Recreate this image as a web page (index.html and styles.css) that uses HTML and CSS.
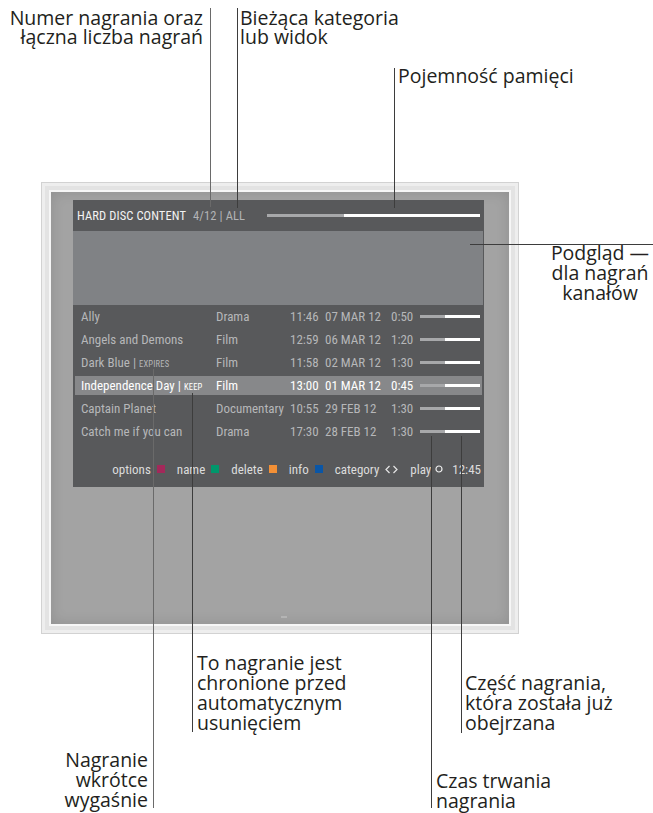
FILE: index.html
```html
<!DOCTYPE html>
<html lang="pl">
<head>
  <meta charset="UTF-8">
  <title>Hard disc content</title>
  <link rel="stylesheet" href="styles.css">
</head>
<body>
  <div class="figure">
    <div class="tv">
      <div class="screen">
        <div class="menu">
          <div class="menu-head">
            <span class="menu-title">HARD DISC CONTENT</span>
            <span class="menu-count">4/12 | ALL</span>
            <div class="bar capacity"><div class="bar-used" style="width: 36%"></div></div>
          </div>
          <div class="preview"></div>
          <div class="list">
            <div class="row">
              <span>Ally</span><span>Drama</span><span>11:46</span><span>07 MAR 12</span><span>0:50</span>
              <div class="bar"><div class="bar-used" style="width: 42%"></div></div>
            </div>
            <div class="row">
              <span>Angels and Demons</span><span>Film</span><span>12:59</span><span>06 MAR 12</span><span>1:20</span>
              <div class="bar"><div class="bar-used" style="width: 42%"></div></div>
            </div>
            <div class="row">
              <span>Dark Blue | <span class="tag">EXPIRES</span></span><span>Film</span><span>11:58</span><span>02 MAR 12</span><span>1:30</span>
              <div class="bar"><div class="bar-used" style="width: 42%"></div></div>
            </div>
            <div class="row selected">
              <span>Independence Day | <span class="tag">KEEP</span></span><span>Film</span><span>13:00</span><span>01 MAR 12</span><span>0:45</span>
              <div class="bar"><div class="bar-used" style="width: 42%"></div></div>
            </div>
            <div class="row">
              <span>Captain Planet</span><span>Documentary</span><span>10:55</span><span>29 FEB 12</span><span>1:30</span>
              <div class="bar"><div class="bar-used" style="width: 42%"></div></div>
            </div>
            <div class="row">
              <span>Catch me if you can</span><span>Drama</span><span>17:30</span><span>28 FEB 12</span><span>1:30</span>
              <div class="bar"><div class="bar-used" style="width: 42%"></div></div>
            </div>
          </div>
          <div class="menu-foot">
            <div class="key">options <span class="swatch red"></span></div>
            <div class="key">name <span class="swatch green"></span></div>
            <div class="key">delete <span class="swatch yellow"></span></div>
            <div class="key">info <span class="swatch blue"></span></div>
            <div class="key">category
              <svg class="chevrons" width="13" height="9" viewBox="0 0 13 9"><polyline points="4.5,1 1,4.5 4.5,8" /><polyline points="8.5,1 12,4.5 8.5,8" /></svg>
            </div>
            <div class="key key-play">play
              <svg class="ring" width="8" height="8" viewBox="0 0 8 8"><circle cx="4" cy="4" r="3" /></svg>
            </div>
            <div class="clock">12:45</div>
          </div>
        </div>
        <div class="standby"></div>
      </div>
    </div>

    <div class="lead lead-count"></div>
    <div class="lead lead-view"></div>
    <div class="lead lead-capacity"></div>
    <div class="lead lead-preview"></div>
    <div class="lead lead-expires"></div>
    <div class="lead lead-keep"></div>
    <div class="lead lead-duration"></div>
    <div class="lead lead-watched"></div>

    <p class="note note-count">Numer nagrania oraz<br>łączna liczba nagrań</p>
    <p class="note note-view">Bieżąca kategoria<br>lub widok</p>
    <p class="note note-capacity">Pojemność pamięci</p>
    <p class="note note-preview">Podgląd —<br>dla nagrań<br>kanałów</p>
    <p class="note note-keep">To nagranie jest<br>chronione przed<br>automatycznym<br>usunięciem</p>
    <p class="note note-expires">Nagranie<br>wkrótce<br>wygaśnie</p>
    <p class="note note-watched">Część nagrania,<br>która została już<br>obejrzana</p>
    <p class="note note-duration">Czas trwania<br>nagrania</p>
  </div>
</body>
</html>
```

FILE: styles.css
```css
body {
  margin: 0;
  background: #fff;
  font-family: "Open Sans", "Noto Sans", sans-serif;
  color: #231f20;
}
.figure {
  position: relative;
  width: 653px;
  height: 813px;
  overflow: hidden;
}

/* tv set */
.tv {
  position: absolute;
  left: 41px;
  top: 182px;
  width: 478px;
  height: 452px;
  box-sizing: border-box;
  padding: 9px;
  background: #e3e3e3;
  border: 1px solid #d2d2d2;
  box-shadow: inset 0 0 0 3px #eeeeee;
}
.screen {
  position: relative;
  height: 100%;
  box-sizing: border-box;
  padding: 8px 0 0 22px;
  background: #a3a3a3;
  box-shadow: 0 0 0 2px #f6f6f6, inset 0 0 14px rgba(0, 0, 0, 0.12);
}
.standby {
  position: absolute;
  left: 230px;
  bottom: 6px;
  width: 6px;
  height: 2px;
  background: #b4b4b4;
}

/* on-screen menu */
.menu {
  width: 411px;
  height: 287px;
  display: flex;
  flex-direction: column;
  background: #58595b;
  font-family: "Roboto", sans-serif;
  font-stretch: 75%;
  font-size: 13px;
  color: #b6b7b9;
}
.menu-head {
  height: 31px;
  display: flex;
  align-items: center;
  padding: 0 4px;
  font-size: 12.5px;
  letter-spacing: 0.1px;
}
.menu-title {
  color: #f2f2f2;
}
.menu-count {
  margin-left: 7px;
  color: #b3b4b6;
}
.capacity {
  margin-left: auto;
  width: 213px;
}
.bar {
  height: 3px;
  background: #fff;
  display: flex;
}
.bar-used {
  height: 100%;
  background: #a7a8aa;
}
.preview {
  height: 74px;
  margin-right: 1px;
  background: #808285;
}
.list {
  display: flex;
  flex-direction: column;
  gap: 4px;
  padding-top: 2px;
}
.row {
  display: grid;
  grid-template-columns: 135px 74px 35px 66px 29px 60px;
  align-items: center;
  height: 19px;
  margin: 0 2px;
  padding-left: 6px;
  white-space: nowrap;
}
.row.selected {
  background: #87888a;
  color: #fff;
}
.tag {
  font-size: 8.5px;
  letter-spacing: 0.2px;
}
.menu-foot {
  margin-top: auto;
  height: 36px;
  display: flex;
  align-items: center;
  justify-content: flex-end;
  gap: 12px;
  padding-right: 3px;
  color: #dcdcdc;
}
.key {
  display: flex;
  align-items: center;
  gap: 6px;
}
.key-play {
  gap: 4px;
}
.swatch {
  width: 8px;
  height: 8px;
}
.swatch.red { background: #a3285a; }
.swatch.green { background: #00976b; }
.swatch.yellow { background: #f39036; }
.swatch.blue { background: #0a56a6; }
.chevrons polyline {
  fill: none;
  stroke: #e6e6e6;
  stroke-width: 1.2;
}
.ring circle {
  fill: none;
  stroke: #eeeeee;
  stroke-width: 1.2;
}
.clock {
  margin-left: -3px;
}

/* leader lines */
.lead {
  position: absolute;
  background: #3d3d3d;
  width: 1px;
}
.lead-count { left: 210px; top: 8px; height: 199px; background: #6a6a6a; }
.lead-view { left: 237px; top: 8px; height: 200px; }
.lead-capacity { left: 394px; top: 68px; height: 140px; }
.lead-preview { left: 470px; top: 244px; width: 183px; height: 1px; }
.lead-expires { left: 153px; top: 369px; height: 439px; background: #6a6a6a; }
.lead-keep { left: 192px; top: 393px; height: 339px; }
.lead-duration { left: 431px; top: 436px; height: 372px; }
.lead-watched { left: 461px; top: 436px; height: 297px; }

/* callout texts */
.note {
  position: absolute;
  margin: 0;
  font-size: 19.5px;
  line-height: 20px;
  white-space: nowrap;
}
.note-count { right: 450px; top: 8px; line-height: 19px; text-align: right; }
.note-view { left: 240px; top: 8px; line-height: 19px; }
.note-capacity { left: 398px; top: 66px; }
.note-preview { left: 545px; top: 243px; width: 110px; text-align: center; }
.note-keep { left: 197px; top: 653px; }
.note-expires { right: 505px; top: 750px; text-align: right; }
.note-watched { left: 465px; top: 673px; }
.note-duration { left: 436px; top: 771px; }
```
